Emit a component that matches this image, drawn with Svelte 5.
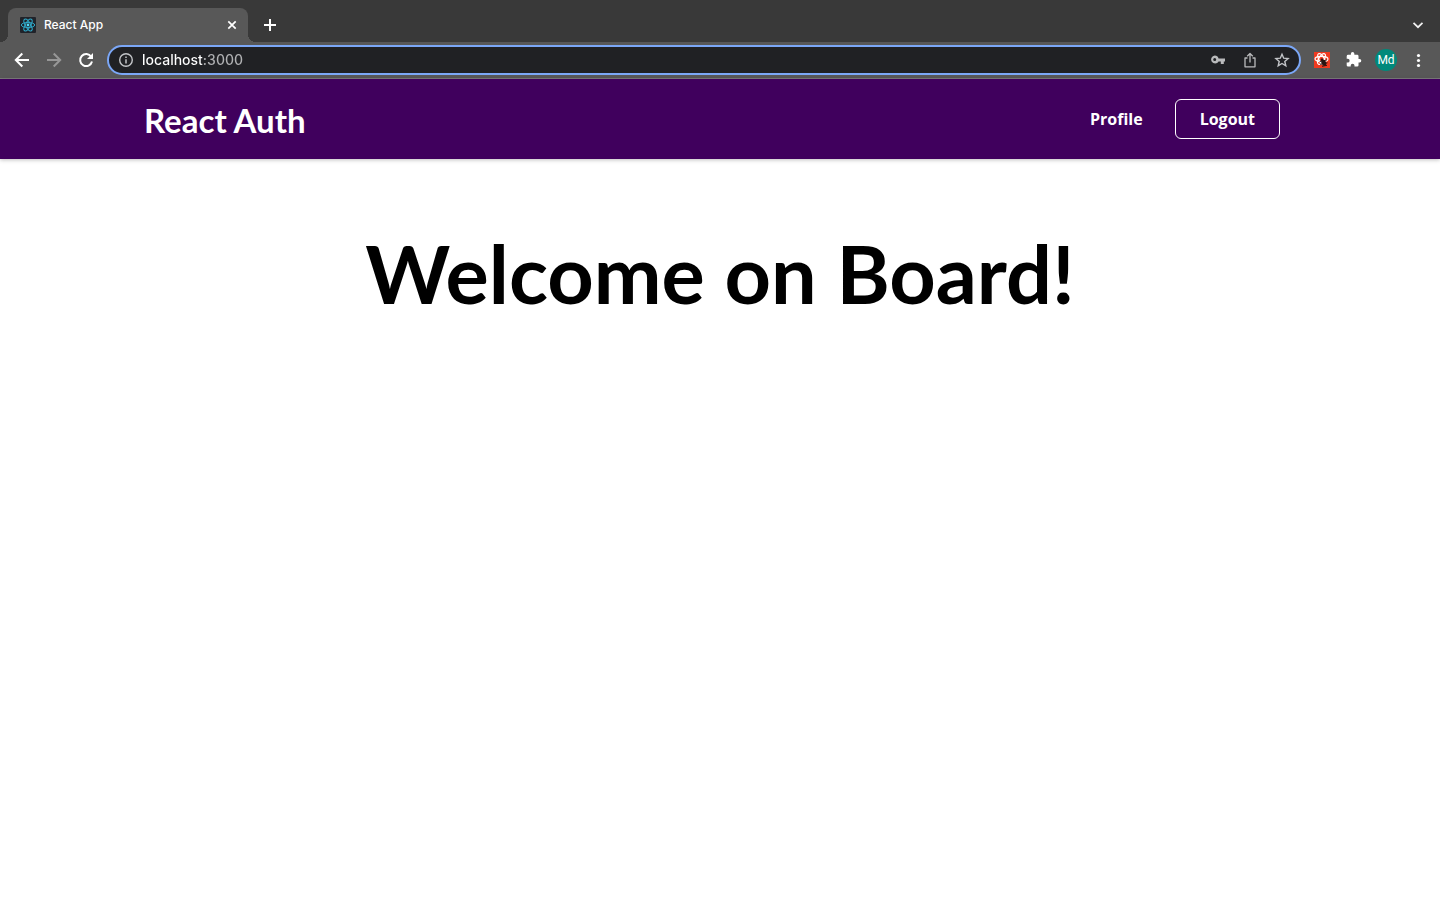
<script>
  let address = $state('localhost:3000');
</script>

<div class="browser">
  <div class="strip">
    <div class="tab">
      <svg class="favicon" viewBox="0 0 16 16" width="16" height="16" aria-hidden="true">
        <rect width="16" height="16" rx="1" fill="#20232a" />
        <g fill="none" stroke="#2fa9c9" stroke-width="1">
          <ellipse cx="8" cy="8" rx="6.7" ry="2.6" />
          <ellipse cx="8" cy="8" rx="6.7" ry="2.6" transform="rotate(60 8 8)" />
          <ellipse cx="8" cy="8" rx="6.7" ry="2.6" transform="rotate(120 8 8)" />
        </g>
        <circle cx="8" cy="8" r="1.4" fill="#4fd8f7" />
      </svg>
      <span class="title">React App</span>
      <button class="plain" aria-label="Close tab">
        <svg viewBox="0 0 16 16" width="16" height="16"><path d="M4.3 4.3l7.4 7.4M11.7 4.3l-7.4 7.4" stroke="#fff" stroke-width="1.7" /></svg>
      </button>
    </div>
    <button class="plain add" aria-label="New tab">
      <svg viewBox="0 0 16 16" width="16" height="16"><path d="M8 2v12M2 8h12" stroke="#fff" stroke-width="2" /></svg>
    </button>
    <button class="plain search" aria-label="Search tabs">
      <svg viewBox="0 0 16 16" width="16" height="16"><path d="M3.5 5.8L8 10.2l4.500-4.400" fill="none" stroke="#f1f1f1" stroke-width="1.7" /></svg>
    </button>
  </div>

  <div class="toolbar">
    <button class="plain" aria-label="Back">
      <svg viewBox="0 0 16 16" width="16" height="16"><path d="M15 8H2M8.300 1.500L1.800 8l6.500 6.500" fill="none" stroke="#fff" stroke-width="2" /></svg>
    </button>
    <button class="plain" aria-label="Forward">
      <svg viewBox="0 0 16 16" width="16" height="16"><path d="M1 8h13M7.700 1.500L14.200 8l-6.500 6.500" fill="none" stroke="#979797" stroke-width="2" /></svg>
    </button>
    <button class="plain" aria-label="Reload">
      <svg viewBox="0 0 16 16" width="16" height="16">
        <path d="M13.200 4.800A6 6 0 1 0 14 9.500" fill="none" stroke="#fff" stroke-width="2" />
        <path d="M15 1v6H9z" fill="#fff" />
      </svg>
    </button>
    <div class="omnibox">
      <svg viewBox="0 0 16 16" width="16" height="16" aria-hidden="true">
        <circle cx="8" cy="8" r="6.300" fill="none" stroke="#c3c5c8" stroke-width="1.400" />
        <path d="M8 7.200v4.300M8 4.400v1.600" stroke="#c3c5c8" stroke-width="1.500" />
      </svg>
      <input type="text" aria-label="Address" bind:value={address} />
      <button class="plain" aria-label="Passwords">
        <svg viewBox="0 0 16 16" width="16" height="16">
          <path fill="#b9babc" fill-rule="evenodd" d="M4.700 3.500a4 4 0 0 1 3.900 3H15v3h-1.200V12h-3V9.500H8.600A4 4 0 1 1 4.700 3.500zm0 2.600a1.500 1.500 0 1 0 0 3 1.500 1.500 0 0 0 0-3z" />
        </svg>
      </button>
      <button class="plain" aria-label="Share">
        <svg viewBox="0 0 16 16" width="16" height="16">
          <path d="M5.500 6H3v8.800h10V6h-2.500M8 10.500V2M5.200 4.300L8 1.500l2.800 2.800" fill="none" stroke="#b9babc" stroke-width="1.300" stroke-linejoin="round" />
        </svg>
      </button>
      <button class="plain" aria-label="Bookmark">
        <svg viewBox="0 0 16 16" width="16" height="16">
          <path d="M8 2.200l1.700 4 4.400.4-3.300 2.900 1 4.300L8 11.500l-3.800 2.300 1-4.300-3.300-2.900 4.400-.4z" fill="none" stroke="#c3c5c8" stroke-width="1.400" />
        </svg>
      </button>
    </div>
    <button class="plain" aria-label="React developer tools">
      <svg viewBox="0 0 16 16" width="16" height="16">
        <rect width="16" height="16" fill="#f03a20" />
        <g fill="none" stroke="#fff" stroke-width="1.200">
          <ellipse cx="7.500" cy="7" rx="6.500" ry="2.700" />
          <ellipse cx="7.500" cy="7" rx="6" ry="2.700" transform="rotate(60 7.500 7)" />
          <ellipse cx="7.500" cy="7" rx="6" ry="2.700" transform="rotate(120 7.500 7)" />
        </g>
        <ellipse cx="9.800" cy="10.800" rx="2.300" ry="3.100" transform="rotate(-25 9.800 10.800)" fill="#291513" />
        <circle cx="8" cy="7.800" r="1.300" fill="#291513" />
        <path d="M5.700 9.500l7-1.500M6 12.300l7.500-1.500M8 14.300l5-1" stroke="#291513" stroke-width="1" />
      </svg>
    </button>
    <button class="plain" aria-label="Extensions">
      <svg viewBox="1 1 23 23" width="16" height="16">
        <path fill="#fff" d="M20.500 11H19V7a2 2 0 0 0-2-2h-4V3.500a2.500 2.500 0 0 0-5 0V5H4a2 2 0 0 0-2 2v3.800h1.500a2.700 2.700 0 0 1 0 5.400H2V20a2 2 0 0 0 2 2h3.800v-1.500a2.700 2.700 0 0 1 5.400 0V22H17a2 2 0 0 0 2-2v-4h1.500a2.500 2.500 0 0 0 0-5z" />
      </svg>
    </button>
    <button class="avatar">Md</button>
    <button class="plain" aria-label="Menu">
      <svg viewBox="0 0 16 16" width="16" height="16" fill="#fff"><circle cx="8.500" cy="3.500" r="1.600" /><circle cx="8.500" cy="8.500" r="1.600" /><circle cx="8.500" cy="13.500" r="1.600" /></svg>
    </button>
  </div>
</div>

<header>
  <a class="logo" href="#home">React Auth</a>
  <nav>
    <a href="#profile">Profile</a>
    <button class="logout">Logout</button>
  </nav>
</header>

<main>
  <h1>Welcome on Board!</h1>
</main>

<style>
  :global(body) {
    margin: 0;
    background: #fff;
  }

  .browser {
    font-family: Inter, sans-serif;
    color: #fff;
  }

  .strip {
    display: flex;
    align-items: center;
    height: 34px;
    padding: 8px 14px 0 8px;
    background: #393939;
  }

  .tab {
    position: relative;
    display: flex;
    align-items: center;
    gap: 8px;
    box-sizing: border-box;
    width: 240px;
    height: 34px;
    padding: 0 8px 0 12px;
    border-radius: 8px 8px 0 0;
    background: #585858;
  }

  .tab::before,
  .tab::after {
    content: '';
    position: absolute;
    bottom: 0;
    width: 8px;
    height: 8px;
  }

  .tab::before {
    right: 100%;
    background: radial-gradient(circle at 0 0, #393939 8px, #585858 8px);
  }

  .tab::after {
    left: 100%;
    background: radial-gradient(circle at 100% 0, #393939 8px, #585858 8px);
  }

  .title {
    flex: 1;
    font-size: 12px;
    font-weight: 500;
    line-height: 16px;
  }

  .plain {
    display: flex;
    padding: 0;
    border: 0;
    background: none;
  }

  .add {
    margin-left: 14px;
  }

  .search {
    margin-left: auto;
  }

  .toolbar {
    display: flex;
    align-items: center;
    gap: 16px;
    height: 36px;
    padding: 0 14px;
    border-bottom: 1px solid #7c7c7c;
    background: #585858;
  }

  .omnibox {
    display: flex;
    flex: 1;
    align-items: center;
    gap: 16px;
    box-sizing: border-box;
    height: 30px;
    margin: 0 -3px;
    padding: 0 9px;
    border: 2px solid #7ba7f7;
    border-radius: 15px;
    background: #202124;
  }

  input {
    flex: 1;
    min-width: 0;
    margin-left: -8px;
    padding: 0;
    border: 0;
    outline: 0;
    background: linear-gradient(to right, #fff 61px, #b0b1b3 61px);
    background-clip: text;
    color: transparent;
    font: 500 14px/20px Inter, sans-serif;
  }

  .avatar {
    width: 22px;
    height: 22px;
    margin: 0 -3px;
    padding: 0;
    border: 0;
    border-radius: 50%;
    background: #00897b;
    color: #fff;
    font: 12px/22px Roboto, sans-serif;
  }

  header {
    display: flex;
    align-items: center;
    justify-content: space-between;
    height: 80px;
    padding: 0 10%;
    background: #40005d;
    box-shadow: 0 1px 4px rgba(0, 0, 0, 0.25);
  }

  .logo {
    padding-top: 2px;
    color: #fff;
    font: bold 33px/40px Lato, sans-serif;
    text-decoration: none;
  }

  nav {
    display: flex;
    align-items: center;
    gap: 32px;
    margin-right: 16px;
    font: bold 16px/22px 'Open Sans', sans-serif;
  }

  nav a {
    color: #fff;
    text-decoration: none;
  }

  .logout {
    padding: 8px 24px;
    border: 1px solid #fff;
    border-radius: 6px;
    background: transparent;
    color: #fff;
    font: inherit;
  }

  main {
    padding: 64px 24px;
    text-align: center;
  }

  h1 {
    margin: 0;
    color: #000;
    font: bold 81px/100px Lato, sans-serif;
  }
</style>
